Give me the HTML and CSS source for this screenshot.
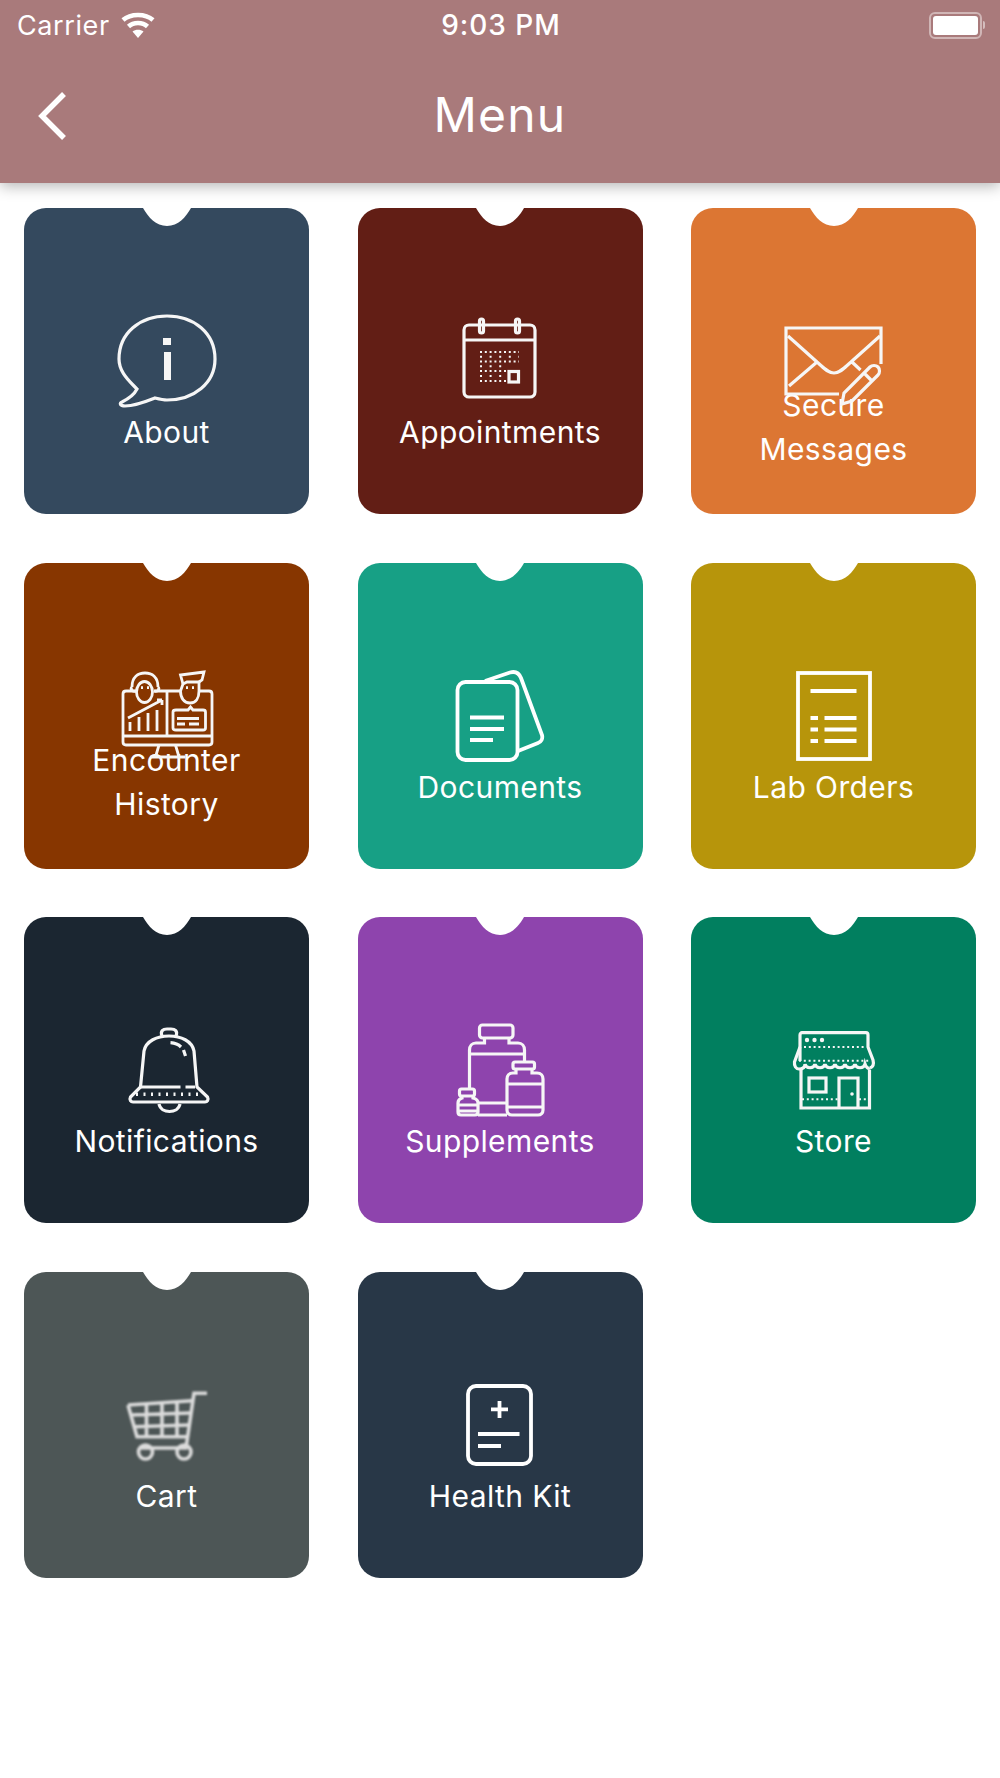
FILE: index.html
```html
<!DOCTYPE html>
<html lang="en">
<head>
  <meta charset="UTF-8">
  <title>Menu</title>
  <link rel="stylesheet" href="styles.css">
</head>
<body>

  <svg class="defs" width="0" height="0">
    <symbol id="notch" viewBox="0 0 48 19">
      <path d="M0 0C5 9 13 18 24 18C35 18 43 9 48 0V-1H0Z"/>
    </symbol>
  </svg>

  <header class="topbar">
    <div class="status">
      <div class="status-left">
        <span>Carrier</span>
        <svg class="wifi" viewBox="0 0 36 26">
          <path d="M18 26L12.5 19.5C15.5 17 20.500 17 23.500 19.500Z" fill="#fff"/>
          <path d="M8.500 14.500C13.500 9.800 22.500 9.800 27.500 14.500M3 8C10.500 1.200 25.500 1.200 33 8" fill="none" stroke="#fff" stroke-width="4.500"/>
        </svg>
      </div>
      <div class="status-time">9:03 PM</div>
      <div class="status-right">
        <div class="battery"><div class="battery-fill"></div></div>
        <div class="battery-nub"></div>
      </div>
    </div>
    <div class="navbar">
      <svg class="back" viewBox="0 0 32 50">
        <path d="M27 3L5 25L27 47" fill="none" stroke="#fff" stroke-width="5.500"/>
      </svg>
      <h1>Menu</h1>
    </div>
  </header>

  <main class="grid">

    <div class="tile tile-about">
      <svg class="notch"><use href="#notch"/></svg>
      <svg class="icon" viewBox="0 0 120 110">
        <path d="M27 78C19 70 12 62 12 51C12 25 33 8 60 8C87 8 108 25 108 51C108 75 87 92 60 92C56 92 52 91 48 90C38 94 28 98 18 98C13 98 12 95 15 94C21 91 27 87 30 81Z"/>
        <path class="solid" d="M56 30h8v7h-8zM57 44h7v28h-7z"/>
      </svg>
      <div class="label">About</div>
    </div>

    <div class="tile tile-appointments">
      <svg class="notch"><use href="#notch"/></svg>
      <svg class="icon" viewBox="0 0 120 110">
        <rect x="24" y="17" width="71" height="72" rx="5"/>
        <path d="M24 32H95"/>
        <rect x="39.500" y="11" width="4" height="14" rx="2"/>
        <rect x="75.500" y="11" width="4" height="14" rx="2"/>
        <path class="dots" d="M40 44H79M40 53.500H79M40 63H67M40 73H67"/>
        <path class="dots thin" d="M40 48.800H79M40 58.300H67M40 68H67"/>
        <rect x="69" y="63.500" width="9.500" height="10.500"/>
      </svg>
      <div class="label">Appointments</div>
    </div>

    <div class="tile tile-messages tile-two">
      <svg class="notch"><use href="#notch"/></svg>
      <svg class="icon" viewBox="0 0 120 110">
        <path d="M65 86H12V20H107V56"/>
        <path d="M14 28L43 54C50 60 54 65 60 65C66 65 70 60 77 54L106 28M15 78L43 54M78 54L86.500 62"/>
        <path d="M68 96L70 85L96 59C98 57 102 57 104 59C106 61 106 65 104 67L78 93ZM90 65L98 73"/>
      </svg>
      <div class="label">Secure<br>Messages</div>
    </div>

    <div class="tile tile-encounter tile-two">
      <svg class="notch"><use href="#notch"/></svg>
      <svg class="icon icon-fine" viewBox="0 0 120 110">
        <path d="M29 28H19C17 28 16 29 16 31V79C16 81 17 82 19 82H102C104 82 105 81 105 79V31C105 29 104 28 102 28H93M47 28H73M60 28V73M16 73H105"/>
        <path d="M52 82L48.500 94M68.500 82L72 94M43.500 94H78.500"/>
        <ellipse cx="37.500" cy="29" rx="8" ry="10.500"/>
        <path d="M25 24C25 14 31 10 38 10C45 10 51 14 51 24M25 24C23 26 25 29 29 28M51 24C53 26 51 29 47 28"/>
        <path d="M73.500 28C73.500 35 77 40 83 40C89 40 92 35 92 28V19H80L76 21L73.500 28Z"/>
        <path d="M76 21L73.500 12L97 9L95 17L92 19"/>
        <path d="M34 24.700h2M40 24.700h2M79 24.700h2M85 24.700h2"/>
        <path d="M23 68V59M32 68V54M41 68V50M50 68V47M21 55L55 37M55 37H50M55 37V42"/>
        <path d="M69 47H81L83.500 44L86 47H96C98 47 98.500 48 98.500 49V65C98.500 66 98 67 96 67H69C67 67 66 66 66 65V49C66 48 67 47 69 47Z"/>
        <path d="M70 55.500H92M70 61H78M82 61H92"/>
      </svg>
      <div class="label">Encounter<br>History</div>
    </div>

    <div class="tile tile-documents">
      <svg class="notch"><use href="#notch"/></svg>
      <svg class="icon icon-bold" viewBox="0 0 120 110">
        <rect x="17.500" y="19" width="60" height="78" rx="8"/>
        <path d="M45 18L70 9.500C75 8 79 10 81 15L102 72C103 76 101 79 98 80L78 88"/>
        <path d="M30 54.500H64M30 66H64M30 77H53"/>
      </svg>
      <div class="label">Documents</div>
    </div>

    <div class="tile tile-lab">
      <svg class="notch"><use href="#notch"/></svg>
      <svg class="icon icon-bold" viewBox="0 0 120 110">
        <rect x="24" y="10" width="72" height="86"/>
        <path d="M36.500 28H82.500M36.500 55H44M50.500 55H82.500M36.500 66.500H44M50.500 66.500H82.500M36.500 78H44M50.500 78H82.500"/>
      </svg>
      <div class="label">Lab Orders</div>
    </div>

    <div class="tile tile-notifications">
      <svg class="notch"><use href="#notch"/></svg>
      <svg class="icon" viewBox="0 0 120 110">
        <path d="M33.500 70L37 34C39 24 50 19 62 19C74 19 85 24 87 34L90 70L100.500 80C102 83 100 85 98 85H26C24 85 22 83 23.500 80Z"/>
        <path d="M55 19C53 14 56 12 60 12H64C68 12 71 14 69 19"/>
        <path d="M33.500 70H73.500M78.500 70H88M52 87C54 97 71 97 73 87M63.500 25.700C68 26 72 28 74 30M76.500 33L78.500 39"/>
        <path class="dots wide" d="M29 77.300H96"/>
      </svg>
      <div class="label">Notifications</div>
    </div>

    <div class="tile tile-supplements">
      <svg class="notch"><use href="#notch"/></svg>
      <svg class="icon" viewBox="0 0 120 110">
        <rect x="39.500" y="8" width="33.500" height="13" rx="3"/>
        <path d="M44.500 21V26H36C32 26 29.500 29 29.500 33V71M69 21V26H78C82 26 84.500 29 84.500 33V45M29.500 37H84.500M38 86H67M38 98H67"/>
        <rect x="73" y="45" width="21.500" height="7" rx="2"/>
        <path d="M76 52V56H73C69 56 67 59 67 62V93C67 96 69 98 72 98H98C101 98 103 96 103 93V62C103 59 101 56 97 56H92V52M67 67H103M67 90H103"/>
        <rect x="19.500" y="72" width="15" height="7" rx="2"/>
        <path d="M22 79V81C19 82 18 84 18 86V95C18 97 19 98 21 98H35C37 98 38 97 38 95V86C38 84 37 82 33 81V79M18 88H38M18 94H38"/>
      </svg>
      <div class="label">Supplements</div>
    </div>

    <div class="tile tile-store">
      <svg class="notch"><use href="#notch"/></svg>
      <svg class="icon" viewBox="0 0 120 110">
        <path d="M27 53V91H95.500V53M26 44V18C26 16.500 27 15.700 28 15.700H92C93 15.700 94 16.500 94 18V30L99 43C100 47 99 50 96 51"/>
        <path d="M26 30L20.500 45C20 49 22 52 25 52C29 52 31 50 31 47C32 52 40 52 41 47C42 52 50 52 51 47C52 52 60 52 61 47C62 52 70 52 71 47C72 52 80 52 81 47C82 52 90 52 91 47C92 50 94 52 96 51"/>
        <rect x="35" y="61" width="17" height="14"/>
        <path d="M65 91V61H84V91"/>
        <path class="dots" d="M30 30H92M25 43.700H97M28 82.300H64M85 82.300H92"/>
        <circle class="solid" cx="33" cy="23" r="2.200"/>
        <circle class="solid" cx="40.500" cy="23" r="2.200"/>
        <circle class="solid" cx="48" cy="23" r="2.200"/>
        <circle class="solid" cx="78" cy="77" r="1.800"/>
      </svg>
      <div class="label">Store</div>
    </div>

    <div class="tile tile-cart">
      <svg class="notch"><use href="#notch"/></svg>
      <svg class="icon icon-blur" viewBox="0 0 120 110">
        <path d="M100 21.300H87L79 76H34"/>
        <path d="M21 33L85 28.700M21 33L30 64.700H81M23.500 43L83 41M27 54.700L82 53M39.500 32V64M55 31V64M70 30V64"/>
        <circle cx="38.500" cy="80" r="7"/>
        <circle cx="77" cy="80" r="7"/>
      </svg>
      <div class="label">Cart</div>
    </div>

    <div class="tile tile-health">
      <svg class="notch"><use href="#notch"/></svg>
      <svg class="icon icon-bold" viewBox="0 0 120 110">
        <rect x="28" y="14" width="63" height="78" rx="8"/>
        <path d="M51 37.300H68M59.500 29V46M38 62H79.500M38 74H61"/>
      </svg>
      <div class="label">Health Kit</div>
    </div>

  </main>

</body>
</html>
```

FILE: styles.css
```css
body {
  margin: 0;
  background: #fff;
  font-family: "Inter", "Liberation Sans", sans-serif;
  color: #fff;
}

.defs {
  display: block;
  height: 0;
}

.topbar {
  height: 183px;
  background: #a97a7b;
  box-shadow: 0 3px 14px rgba(0, 0, 0, 0.3);
}

.status {
  display: grid;
  grid-template-columns: 1fr auto 1fr;
  align-items: center;
  height: 50px;
  padding: 0 15px 0 17px;
  font-size: 27px;
}

.status-left {
  display: flex;
  align-items: center;
  gap: 10px;
  letter-spacing: 0.6px;
}

.status-time {
  font-size: 28px;
  font-weight: 500;
  letter-spacing: 1px;
}

.status-right {
  display: flex;
  justify-content: flex-end;
  align-items: center;
  gap: 1px;
}

.wifi {
  width: 36px;
  height: 26px;
}

.battery {
  width: 45px;
  height: 19px;
  padding: 2px;
  border: 2px solid rgba(255, 255, 255, 0.45);
  border-radius: 6px;
}

.battery-fill {
  height: 100%;
  background: #fff;
  border-radius: 3px;
}

.battery-nub {
  width: 2px;
  height: 8px;
  background: rgba(255, 255, 255, 0.5);
  border-radius: 0 2px 2px 0;
}

.navbar {
  position: relative;
  display: flex;
  justify-content: center;
  align-items: center;
  height: 129px;
}

.navbar h1 {
  margin: 0;
  font-size: 48px;
  font-weight: 400;
  line-height: 1;
  letter-spacing: 1.200px;
}

.back {
  position: absolute;
  left: 37px;
  top: 41px;
  width: 32px;
  height: 50px;
}

.grid {
  display: grid;
  grid-template-columns: repeat(3, 285px);
  grid-auto-rows: 306px;
  column-gap: 48.500px;
  row-gap: 48.670px;
  padding: 25px 24px 0;
}

.tile {
  position: relative;
  display: flex;
  flex-direction: column;
  align-items: center;
  padding-top: 100px;
  box-sizing: border-box;
  border-radius: 22px;
  text-align: center;
}

.notch {
  position: absolute;
  top: 0;
  left: 118.500px;
  width: 48px;
  height: 19px;
  fill: #fff;
}

.icon {
  flex: none;
  width: 120px;
  height: 110px;
  fill: none;
  stroke: #f6f6f6;
  stroke-width: 3.200;
  filter: blur(0.4px);
}

.icon .solid {
  fill: #f6f6f6;
  stroke: none;
}

.icon .dots {
  stroke-width: 2;
  stroke-dasharray: 2 2.800;
}

.icon .dots.thin {
  stroke-dasharray: 2 7.600;
}

.icon .dots.wide {
  stroke-width: 3.500;
  stroke-dasharray: 2 5.500;
}

.icon-fine {
  stroke-width: 2.800;
}

.icon-bold {
  stroke: #fff;
  stroke-width: 3.800;
}

.icon-blur {
  stroke: #dcdcdc;
  stroke-width: 3.600;
  filter: blur(0.8px);
}

.label {
  margin-top: -8px;
  font-size: 30px;
  line-height: 44px;
  letter-spacing: 0.400px;
  font-weight: 400;
  color: #fff;
}

.tile-two .label {
  margin-top: -35px;
}

.tile-about { background: #34495e; }
.tile-appointments { background: #621e15; }
.tile-messages { background: #dc7633; }
.tile-encounter { background: #873600; }
.tile-documents { background: #17a085; }
.tile-lab { background: #b7950b; }
.tile-notifications { background: #1b2631; }
.tile-supplements { background: #8e44ad; }
.tile-store { background: #017f5f; }
.tile-cart { background: #4d5656; }
.tile-health { background: #283747; }
```
